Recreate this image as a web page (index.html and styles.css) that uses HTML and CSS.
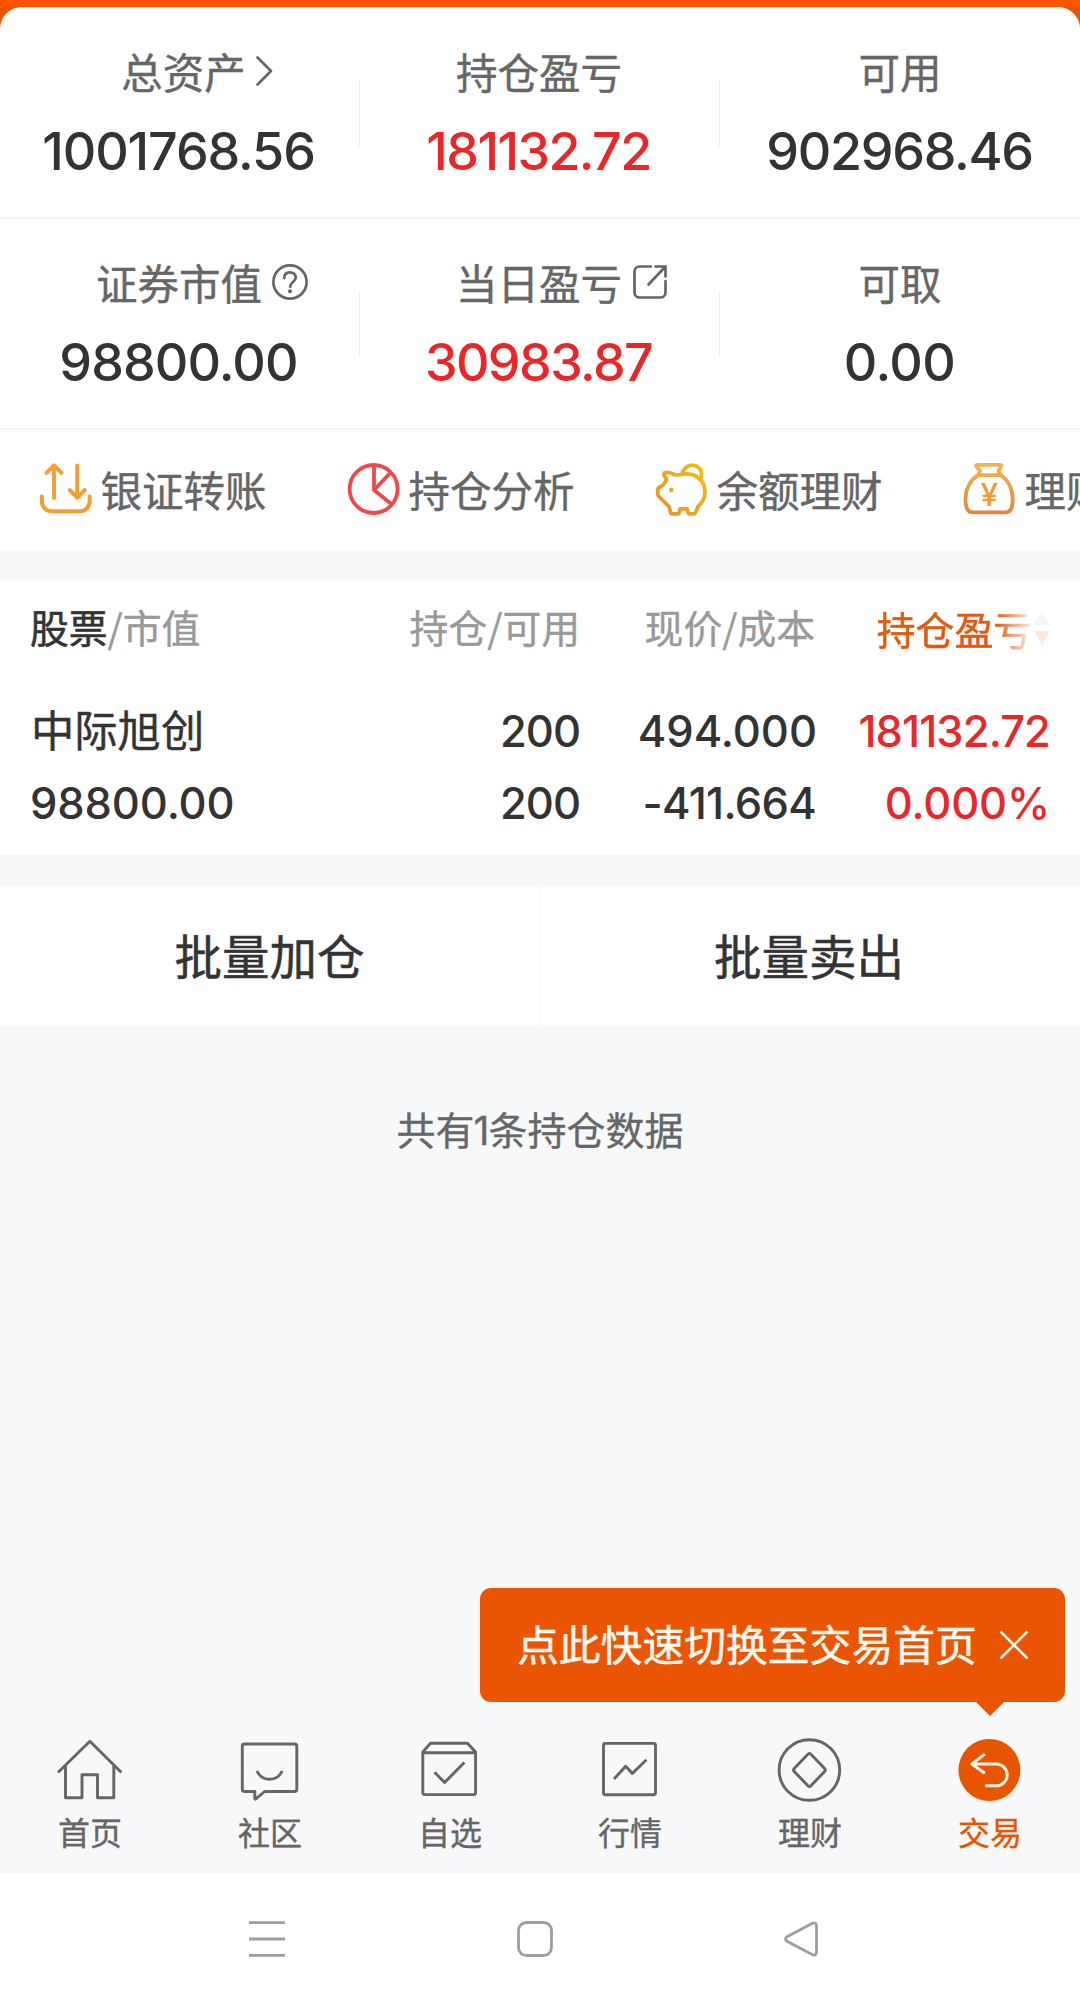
FILE: index.html
```html
<!DOCTYPE html>
<html lang="zh-CN">
<head>
<meta charset="utf-8">
<title>交易持仓</title>
<link rel="stylesheet" href="styles.css">
</head>
<body>
<div class="app">
  <header class="topbar"></header>
  <section class="assets">
    <div class="assets-row">
      <div class="asset">
        <div class="asset-label asset-label-link"><span>总资产</span><svg class="chevron" viewBox="0 0 17 30"><path d="M1.5 1.5 15 15 1.5 28.5"/></svg></div>
        <div class="asset-value v-total">1001768.56</div>
      </div>
      <div class="asset">
        <div class="asset-label"><span>持仓盈亏</span></div>
        <div class="asset-value red v-profit">181132.72</div>
      </div>
      <div class="asset">
        <div class="asset-label"><span>可用</span></div>
        <div class="asset-value v-usable">902968.46</div>
      </div>
    </div>
    <div class="assets-row">
      <div class="asset">
        <div class="asset-label"><span>证券市值</span><svg class="help" viewBox="0 0 36 36"><circle cx="18" cy="18" r="16.6"/><path d="M12.2 14.2C12.2 10.4 14.6 8.300 18 8.300S23.800 10.600 23.800 13.600C23.800 17.600 18.200 18 18.200 22.800"/><circle class="dot" cx="18" cy="27.300" r="2"/></svg></div>
        <div class="asset-value v-market">98800.00</div>
      </div>
      <div class="asset">
        <div class="asset-label"><span>当日盈亏</span><svg class="share" viewBox="0 0 34 36"><path d="M18 2.500H6.500a5 5 0 0 0-5 5V28.500a5 5 0 0 0 5 5H27.500a5 5 0 0 0 5-5V17M22.500 2.500H32.500V12.500M32.500 2.500 15.500 20.500"/></svg></div>
        <div class="asset-value red v-today">30983.87</div>
      </div>
      <div class="asset">
        <div class="asset-label"><span>可取</span></div>
        <div class="asset-value v-cash">0.00</div>
      </div>
    </div>
  </section>

  <section class="shortcuts">
    <div class="shortcut">
      <svg class="sc-icon transfer" viewBox="0 0 52 52"><path d="M14 35V2.500M6.500 9.800 14 2.300 21.500 9.800M37.200 2.500V34.500M29.700 27 37.200 34.500 44.700 27M1.800 33.500V37.500C1.800 44 6 48.300 12 48.300H39.500C45.500 48.300 49.700 44 49.700 37.500V33.500"/></svg>
      <span>银证转账</span>
    </div>
    <div class="shortcut">
      <svg class="sc-icon pie" viewBox="0 0 52 52"><circle cx="25.600" cy="26" r="24"/><path d="M26 2V27L43.300 41M26 27 42 10.300"/></svg>
      <span>持仓分析</span>
    </div>
    <div class="shortcut">
      <svg class="sc-icon pig" viewBox="0 0 52 52"><defs><linearGradient id="gold" x1="0" y1="1" x2="1" y2="0"><stop offset="0" stop-color="#e8922a"/><stop offset="1" stop-color="#f3bc14"/></linearGradient></defs><path stroke="url(#gold)" d="M25 11.500C39 8.500 49 17 49 29C49 35.500 46 40 42 43.500L39.500 49.500Q39 50.800 37.500 50.800H33.500Q32.300 50.800 32 49.500L31.200 45.800H24.200L23.300 49.500Q23 50.800 21.700 50.800H16.500Q15 50.800 14.700 49.500L13 43.500L3.300 34Q1.800 32.500 1.800 30.500V27Q1.800 24.800 3.800 24L7 22.300L10.700 16.800L8 12.300Q7.500 9.700 10 9.500C14 9 17 11 19 11.600Q22 12.200 25 11.500ZM26 11C28.500 3.500 34 1 39 2.500C45 4.500 47 10.500 44.500 16"/><circle cx="15.200" cy="27" r="2.300"/></svg>
      <span>余额理财</span>
    </div>
    <div class="shortcut">
      <svg class="sc-icon bag" viewBox="0 0 52 52"><defs><linearGradient id="amber" x1="0" y1="1" x2="0" y2="0"><stop offset="0" stop-color="#e2873a"/><stop offset="1" stop-color="#f0b454"/></linearGradient></defs><path stroke="url(#amber)" d="M13.500 1.800H36Q38 1.800 37.300 3.300L34.500 8L37 12.200C44 17 48.700 26 48.700 36.500C48.700 45 46 49.300 41.500 49.300H8.500C4 49.300 1.500 45 1.500 36.500C1.500 26 6.500 17 14 12.200L16 8L12.300 3.300Q11.700 1.800 13.500 1.800ZM14 12.200H37"/><text x="25.300" y="43" text-anchor="middle">¥</text></svg>
      <span>理财</span>
    </div>
  </section>

  <section class="holdings">
    <div class="grid head">
      <div class="stock"><span class="dark">股票</span>/市值</div>
      <div>持仓/可用</div>
      <div>现价/成本</div>
      <div class="sorted"><span>持仓盈亏</span><svg viewBox="0 0 16 36"><path class="up" d="M8 1 16 15H0Z"/><path class="down" d="M0 21H16L8 35Z"/></svg></div>
    </div>
    <div class="grid line">
      <div class="name">中际旭创</div>
      <div class="n-qty">200</div>
      <div class="n-price">494.000</div>
      <div class="red n-pl">181132.72</div>
    </div>
    <div class="grid line">
      <div class="n-mv">98800.00</div>
      <div class="n-qty">200</div>
      <div class="n-cost">-411.664</div>
      <div class="red n-pct">0.000%</div>
    </div>
  </section>

  <section class="batch">
    <button>批量加仓</button>
    <button>批量卖出</button>
  </section>

  <main class="summary">共有<span>1</span>条持仓数据</main>

  <nav class="tabs">
    <div class="tip"><span>点此快速切换至交易首页</span><svg viewBox="0 0 30 30"><path d="M1.500 1.500 28.500 28.500M28.500 1.500 1.500 28.500"/></svg></div>
    <a class="tab"><svg viewBox="0 0 68 68"><path d="M2 38.500 33.900 7.200 65.400 38.500M9.500 32V63.800H26V40.800H41.500V63.800H57.800V32"/></svg>首页</a>
    <a class="tab"><svg viewBox="0 0 68 68"><path d="M8.500 10H58.500Q60.800 10 60.800 12.300V55.200Q60.800 57.500 58.500 57.500H28.700L19.500 65.200 18.800 64.800V57.500H8.500Q6.300 57.500 6.300 55.200V12.300Q6.300 10 8.500 10ZM21 37C26 48 41 48 46.200 37"/></svg>社区</a>
    <a class="tab"><svg viewBox="0 0 68 68"><path d="M6.800 18.700H59.600M14.500 9.300H51.500L59.600 18V58.500Q59.600 60.600 57.500 60.600H9Q6.800 60.600 6.800 58.500V18ZM18.500 38.200 28.600 48.500 48.300 28.500"/></svg>自选</a>
    <a class="tab"><svg viewBox="0 0 68 68"><rect x="7.500" y="9.400" width="52" height="51.300" rx="2"/><path d="M18 45 29.700 32.200 36.300 39.500 50.400 25.700"/></svg>行情</a>
    <a class="tab"><svg viewBox="0 0 68 68"><circle cx="33.400" cy="36" r="30.300"/><path d="M31.900 20.300Q33.400 18.800 34.900 20.300L48.600 34.500Q50 36 48.600 37.500L34.900 51.700Q33.400 53.200 31.900 51.700L18.200 37.500Q16.800 36 18.200 34.500Z"/></svg>理财</a>
    <a class="tab active"><svg viewBox="0 0 68 68"><circle class="disc" cx="33.400" cy="36" r="31"/><path d="M28.800 20.200 15.800 30 28.800 39.200M15.800 30H40.300A10.900 10.900 0 0 1 40.300 51.800H29.200"/></svg>交易</a>
  </nav>

  <footer class="sysbar">
    <svg width="36" height="36" viewBox="0 0 36 36"><path d="M0 1.700H36M0 18H36M0 34.300H36"/></svg>
    <svg width="36" height="36" viewBox="0 0 36 36"><rect x="1.500" y="1.500" width="33" height="33" rx="8"/></svg>
    <svg width="34" height="36" viewBox="0 0 34 36"><path d="M28.500 2.200 3 15.700Q0 18 3 20.300L28.500 33.800Q32.500 35.300 32.500 31V5Q32.500 .700 28.500 2.200Z"/></svg>
  </footer>
</div>
</body>
</html>
```

FILE: styles.css
```css
* { box-sizing: border-box; }
body {
  margin: 0;
  background: #f6f8fa;
  font-family: "Noto Sans CJK SC", "Noto Sans", sans-serif;
  color: #333;
}
svg { display: block; fill: none; overflow: visible; flex: none; }
.red { color: #e82828; }

.app {
  width: 1080px;
  height: 2005px;
  display: flex;
  flex-direction: column;
  overflow: hidden;
}
.topbar { height: 7px; background: #ff5500; flex: none; }

/* account summary */
.assets {
  flex: none;
  background: radial-gradient(circle at 22px 22px, #fff 21.5px, #e85500 22.5px) 0 0 / 22px 22px no-repeat,
              radial-gradient(circle at 0 22px, #fff 21.5px, #e85500 22.5px) 100% 0 / 22px 22px no-repeat,
              #fff;
}
.assets-row {
  display: grid;
  grid-template-columns: repeat(3, 1fr);
  height: 212px;
  border-bottom: 2px solid #f3f4f5;
  padding-top: 34px;
}
.assets-row + .assets-row { height: 211px; padding-top: 33px; }
.asset {
  background: linear-gradient(#ebebeb, #ebebeb) 100% 39px / 1px 66px no-repeat;
}
.asset:last-child { background: none; }
.asset-label {
  display: grid;
  grid-template-columns: 1fr auto 1fr;
  align-items: center;
  height: 60px;
  line-height: 59px;
  padding-right: 2px;
  font-size: 41.5px;
  color: #666;
  -webkit-text-stroke: .4px currentColor;
}
.asset:last-child .asset-label { padding-right: 0; }
.asset-label span { grid-column: 2; }
.asset-label svg { stroke: #666; stroke-width: 2.7; stroke-linejoin: round; stroke-linecap: round; }
.asset-label-link { padding-left: 9px; }
.chevron { width: 17px; height: 30px; margin-left: 10px; }
.help { width: 36px; height: 36px; margin-left: 10px; }
.help .dot { fill: #666; stroke: none; }
.share { width: 34px; height: 36px; margin-left: 11px; }
.asset-value {
  margin-top: 21px;
  padding-right: 3px;
  line-height: 60px;
  text-align: center;
  font-family: Inter, "Noto Sans", sans-serif;
  font-size: 52px;
  font-weight: 450;
}
.v-total { letter-spacing: -1.1px; }
.v-profit { letter-spacing: -1.6px; }
.v-usable { letter-spacing: -1.3px; padding-right: 1px; }
.v-market { letter-spacing: -.9px; }
.v-today { letter-spacing: -1.6px; }
.v-cash { letter-spacing: -.6px; padding-right: 1px; }

.shortcuts {
  flex: none;
  display: flex;
  height: 120px;
  padding-left: 40px;
  background: #fff;
  overflow: hidden;
}
.shortcut {
  flex: 0 0 308px;
  display: flex;
  align-items: center;
  gap: 8.5px;
  height: 118px;
  font-size: 41.5px;
  color: #666;
  white-space: nowrap;
}
.shortcut span { -webkit-text-stroke: .4px #666; }
.sc-icon { width: 52px; height: 52px; stroke-width: 3.8; stroke-linecap: round; stroke-linejoin: round; }
.transfer { stroke: #f09e35; stroke-width: 4; }
.pie { stroke: #f04848; }
.pig circle { fill: #efa51c; }
.bag text { fill: #f09a30; font: 500 31px Inter, sans-serif; }

/* positions */
.holdings {
  flex: none;
  margin-top: 30px;
  height: 277px;
  padding-top: 17px;
  background: #fff;
  border-bottom: 2px solid #f3f4f5;
}
.grid {
  display: grid;
  grid-template-columns: 300px 249px 235px 234px;
  padding-left: 31px;
  text-align: right;
  height: 72px;
  line-height: 72px;
}
.grid > :first-child { text-align: left; }
.head {
  height: 62px;
  line-height: 58px;
  color: #999;
  font-size: 38.8px;
  margin-bottom: 36px;
  -webkit-text-stroke: .4px currentColor;
}
.stock { margin-left: -1px; }
.dark { color: #333; -webkit-text-stroke: .6px #333; }
.sorted { display: flex; justify-content: flex-end; align-items: center; gap: 2px; margin-right: -1px; -webkit-text-stroke: 0; }
.sorted span {
  color: transparent;
  background: linear-gradient(90deg, #e05a10 76%, #fdf0e8 100%);
  background-clip: text;
  -webkit-background-clip: text;
  -webkit-text-stroke: .6px transparent;
}
.sorted svg { width: 16px; height: 36px; }
.up { fill: #f5f5f5; }
.down { fill: #fde8de; }
.line { font-family: Inter, sans-serif; font-weight: 450; font-size: 43.5px; }
.line .name {
  font-family: "Noto Sans CJK SC", sans-serif;
  font-weight: 400;
  font-size: 43.3px;
  line-height: 67px;
  -webkit-text-stroke: .4px #333;
}
.n-qty { letter-spacing: -1px; }
.n-price { margin-right: -2px; }
.n-cost { letter-spacing: -.7px; margin-right: -1px; }
.n-pl { letter-spacing: -.9px; margin-right: -1px; }
.n-pct { letter-spacing: -.2px; margin-right: -1px; }
.n-mv { letter-spacing: -.1px; margin-left: -1px; }

.batch {
  flex: none;
  display: flex;
  height: 138px;
  margin-top: 30px;
  background: #fff;
}
.batch button {
  flex: none;
  width: 539px;
  border: 0;
  padding: 0 0 4px;
  background: none;
  font: 400 47.5px "Noto Sans CJK SC", sans-serif;
  color: #333;
  -webkit-text-stroke: .5px #333;
}
.batch button + button { width: 541px; border-left: 1px solid #f5f5f6; padding-right: 2px; }

.summary {
  flex: 1;
  padding-top: 73px;
  text-align: center;
  font-size: 39px;
  line-height: 60px;
  color: #666;
  -webkit-text-stroke: .3px #666;
}
.summary span { font-family: Inter, sans-serif; letter-spacing: -1px; margin-left: -1px; }

/* bottom navigation */
.tabs {
  position: relative;
  flex: none;
  display: grid;
  grid-template-columns: repeat(6, 180px);
  height: 153px;
  background: #f8f8fb;
}
.tab {
  display: flex;
  flex-direction: column;
  align-items: center;
  padding-top: 14px;
  font-size: 32px;
  line-height: 58px;
  color: #666;
  -webkit-text-stroke: .4px currentColor;
}
.tab svg { width: 68px; height: 68px; stroke: #666; stroke-width: 2.9; stroke-linejoin: round; }
.active { color: #e85500; }
.active svg { stroke: #fff3e8; }
.tab .disc { fill: #e85500; stroke: none; }
.tip {
  position: absolute;
  right: 15px;
  top: -132px;
  width: 585px;
  height: 114px;
  padding: 0 36px 0 37px;
  display: flex;
  align-items: center;
  justify-content: space-between;
  background: #ea5504;
  border-radius: 11px;
  color: #fff8f0;
  font-size: 41.8px;
  line-height: 60px;
}
.tip span { padding-bottom: 5px; -webkit-text-stroke: .5px #fff8f0; }
.tip::after {
  content: "";
  position: absolute;
  left: 495px;
  top: 113px;
  border: 15px solid transparent;
  border-top-color: #ea5504;
  border-bottom: 0;
}
.tip svg { width: 30px; height: 30px; stroke: #fff8f0; stroke-width: 2.5; }

.sysbar {
  flex: none;
  height: 132px;
  padding: 0 262px 0 249px;
  display: flex;
  justify-content: space-between;
  align-items: center;
  background: #fff;
}
.sysbar svg { stroke: #9e9e9e; stroke-width: 2.8; }
```
